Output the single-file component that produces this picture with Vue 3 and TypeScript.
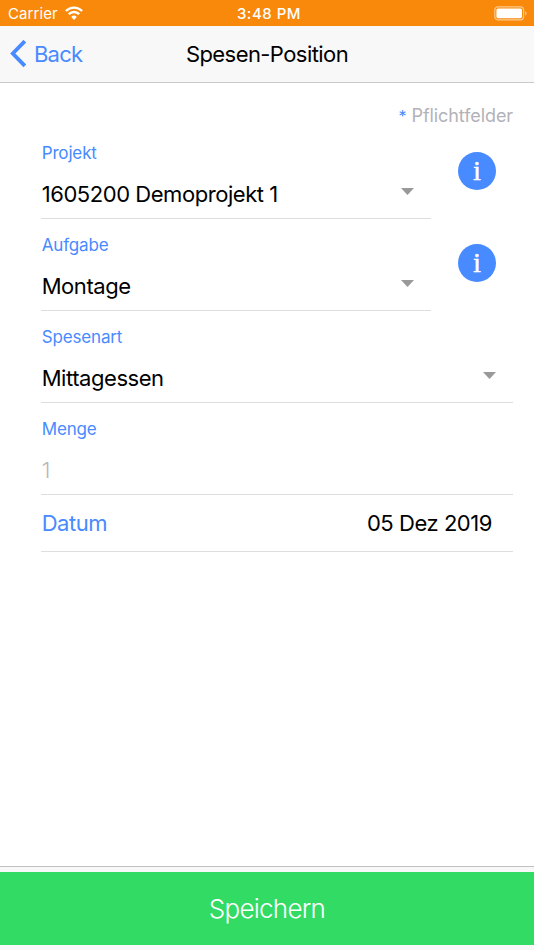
<script setup lang="ts">
interface Field {
  label: string
  value: string
  kind: 'select' | 'input'
  info: boolean
}

const fields: Field[] = [
  { label: 'Projekt', value: '1605200 Demoprojekt 1', kind: 'select', info: true },
  { label: 'Aufgabe', value: 'Montage', kind: 'select', info: true },
  { label: 'Spesenart', value: 'Mittagessen', kind: 'select', info: false },
  { label: 'Menge', value: '1', kind: 'input', info: false },
]
</script>

<template>
  <div class="screen">
    <div class="status">
      <div class="carrier">
        <span>Carrier</span>
        <svg class="wifi" width="18" height="14" viewBox="0 0 18 14">
          <path d="M.9 5a11.3 11.3 0 0 1 16.2 0" />
          <path d="M3.8 8.2a7.3 7.3 0 0 1 10.4 0" />
          <path class="dot" d="M6.2 10.9a4 4 0 0 1 5.6 0L9 13.9z" />
        </svg>
      </div>
      <span class="clock">3:48 PM</span>
      <div class="power">
        <svg width="34" height="15" viewBox="0 0 34 15">
          <rect class="shell" x="0.8" y="0.8" width="28.8" height="13" rx="3" />
          <rect class="charge" x="2.4" y="2.4" width="25.6" height="9.8" rx="1.6" />
          <path class="tip" d="M31.2 5v4.6c1.8-.7 1.8-3.9 0-4.6z" />
        </svg>
      </div>
    </div>

    <header class="nav">
      <button class="back" type="button">
        <svg width="16" height="28" viewBox="0 0 16 28">
          <path d="M14.8 1.2 2.8 13.5l12 12.3" />
        </svg>
        <span>Back</span>
      </button>
      <h1 class="title">Spesen-Position</h1>
    </header>

    <main class="content">
      <p class="required"><span class="star">*</span> Pflichtfelder</p>
      <div v-for="field in fields" :key="field.label" class="row">
        <div class="field">
          <span class="label">{{ field.label }}</span>
          <div class="line">
            <span class="value" :class="{ muted: field.kind === 'input' }">{{ field.value }}</span>
            <svg v-if="field.kind === 'select'" class="arrow" width="13" height="7" viewBox="0 0 13 7">
              <path d="M0 0h13L6.5 7z" />
            </svg>
          </div>
        </div>
        <button v-if="field.info" class="info" type="button"><span>i</span></button>
      </div>
      <div class="date">
        <span class="date-label">Datum</span>
        <span class="date-value">05 Dez 2019</span>
      </div>
    </main>

    <footer class="footer">
      <button class="save" type="button"><span>Speichern</span></button>
    </footer>
  </div>
</template>

<style>
body {
  margin: 0;
}
</style>

<style scoped>
.screen {
  display: flex;
  flex-direction: column;
  width: 534px;
  height: 950px;
  overflow: hidden;
  background: #fff;
  color: #000;
  font-family: Inter, "Liberation Sans", sans-serif;
}

button {
  margin: 0;
  padding: 0;
  border: 0;
  background: none;
  font: inherit;
}

.status {
  display: grid;
  grid-template-columns: 1fr auto 1fr;
  align-items: center;
  box-sizing: border-box;
  height: 26px;
  padding: 2px 6px 0 8px;
  background: #f8890b;
  color: #fff;
  font-size: 15px;
  line-height: 24px;
}

.carrier {
  display: flex;
  align-items: center;
  gap: 7px;
  letter-spacing: 0.1px;
}

.wifi {
  fill: none;
  stroke: #fff;
  stroke-width: 2.4;
  margin-top: -3px;
}

.wifi .dot {
  fill: #fff;
  stroke: none;
}

.clock {
  padding-left: 2px;
  font-weight: 500;
  letter-spacing: 0.5px;
}

.power {
  display: flex;
  justify-content: flex-end;
  margin-top: -2px;
}

.shell {
  fill: none;
  stroke: #fcc98c;
  stroke-width: 1.2;
}

.charge {
  fill: #fff;
}

.tip {
  fill: #fcc98c;
}

.nav {
  display: grid;
  grid-template-columns: 1fr auto 1fr;
  align-items: center;
  box-sizing: border-box;
  height: 57px;
  padding: 0 10px;
  border-bottom: 1px solid #c9c9cb;
  background: #f8f8f8;
}

.back {
  display: flex;
  align-items: center;
  gap: 8px;
  color: #488aff;
  font-size: 22px;
  line-height: 28px;
  letter-spacing: -0.8px;
}

.back svg {
  fill: none;
  stroke: #488aff;
  stroke-width: 3.8;
}

.title {
  margin: 0;
  font-size: 22px;
  font-weight: 400;
  line-height: 28px;
  letter-spacing: -0.57px;
}

.content {
  flex: 1;
  padding: 0 21px 0 41px;
}

.required {
  margin: 0;
  padding-top: 21px;
  height: 23px;
  color: #b2b2b7;
  font-size: 18px;
  line-height: 23px;
  letter-spacing: -0.08px;
  text-align: right;
}

.star {
  font-size: 16px;
  color: #488aff;
}

.row {
  display: flex;
  gap: 27px;
  height: 92px;
}

.field {
  flex: 1;
  display: flex;
  flex-direction: column;
  box-sizing: border-box;
  padding-top: 15px;
  border-bottom: 1px solid #dedede;
}

.label {
  padding-left: 0.7px;
  color: #488aff;
  font-size: 17px;
  line-height: 22px;
  letter-spacing: -0.15px;
}

.line {
  display: flex;
  align-items: center;
  justify-content: space-between;
  margin-top: 16px;
  padding: 0 17px 0 0.7px;
  height: 28px;
}

.value {
  font-size: 22px;
  line-height: 28px;
  letter-spacing: -0.45px;
}

.muted {
  color: #b8b8b8;
  font-weight: 300;
}

.arrow {
  margin-top: -6px;
  fill: #999;
}

.info {
  display: flex;
  align-items: center;
  justify-content: center;
  width: 38px;
  height: 38px;
  margin: 25px 17px 0 0;
  border-radius: 50%;
  background: #488aff;
  color: #fff;
  font-family: "Liberation Serif", serif;
  font-size: 27px;
  line-height: 38px;
  -webkit-text-stroke: 0.6px #fff;
}

.date {
  display: flex;
  align-items: center;
  justify-content: space-between;
  box-sizing: border-box;
  height: 57px;
  padding: 0 21px 0 0.7px;
  border-bottom: 1px solid #dedede;
  font-size: 22px;
  line-height: 28px;
  letter-spacing: -0.45px;
}

.date-label {
  color: #488aff;
}

.footer {
  box-sizing: border-box;
  height: 84px;
  padding-top: 5px;
  border-top: 1px solid #c0c0c2;
  background: #f8f8f8;
}

.save {
  display: block;
  width: 100%;
  height: 73px;
  background: #32db64;
  color: #fff;
  font-size: 26px;
  font-weight: 300;
  line-height: 73px;
  letter-spacing: -0.75px;
  text-align: center;
}
</style>
